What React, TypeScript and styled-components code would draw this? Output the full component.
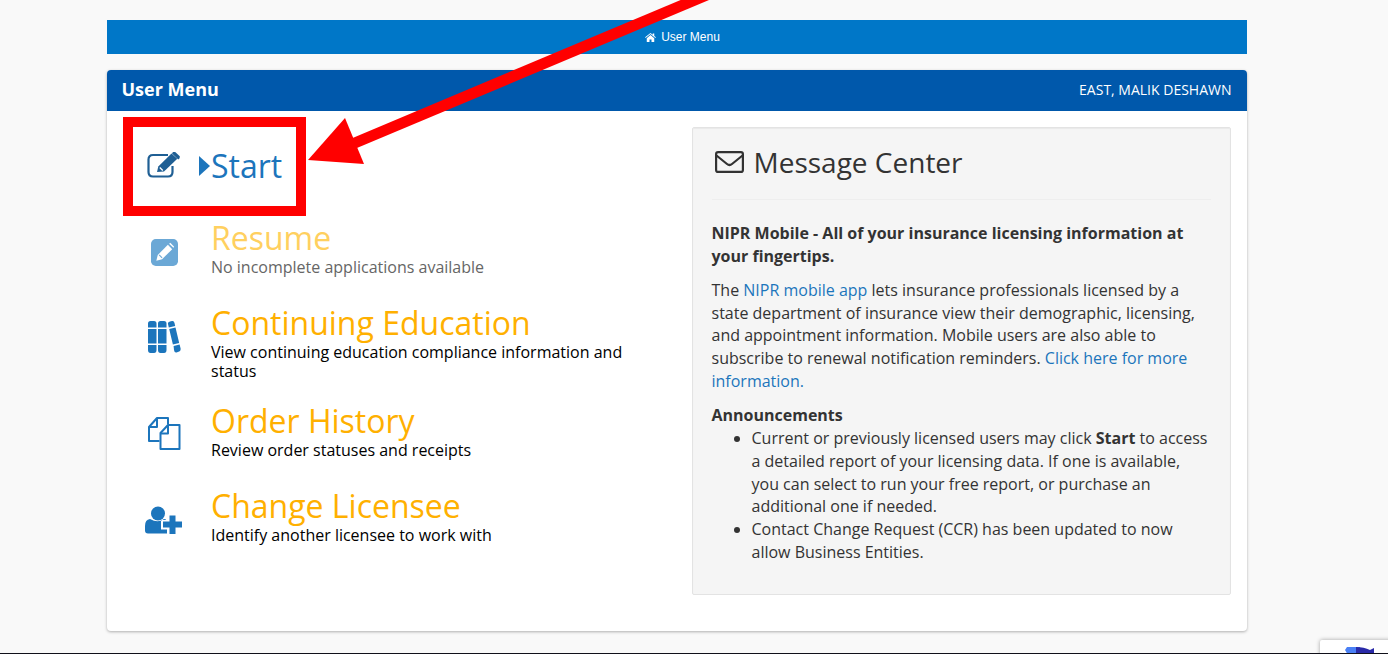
import { ReactNode } from 'react'
import styled, { createGlobalStyle } from 'styled-components'

const GlobalStyle = createGlobalStyle`
  html, body {
    margin: 0;
    height: 654px;
    overflow: hidden;
    background: #f9f9f9;
  }
  * {
    box-sizing: border-box;
  }
`

const EditIcon = () => (
  <svg width="34" height="26" viewBox="0 0 34 26" fill="none">
    <path d="M21 3H6Q1.500 3 1.500 7.500V20Q1.500 24.500 6 24.500H21Q25.500 24.500 25.500 20V14" stroke="#1f5f94" strokeWidth="2.200" />
    <path d="M10 20l1.300-5.600L24.500 1.500l5.800 5.300L17 19.500z" fill="#1f5f94" />
    <path d="M26 0l2-.2 4.800 4.400-.2 2-1.400 1.200-6.200-5.800z" fill="#1f5f94" />
    <path d="M12.800 15.600l3 2.800" stroke="#fff" strokeWidth="1.400" />
  </svg>
)

const PencilSquareIcon = () => (
  <svg width="27" height="27" viewBox="0 0 28 28">
    <rect width="28" height="28" rx="5" fill="#6ba8d6" />
    <path d="M5.500 22.500l1.500-6L17.500 6l4.500 4.500L11.500 21z" fill="#fff" />
    <path d="M18.800 4.800l1.200-.8 4 4-.8 1.200z" fill="#fff" />
    <path d="M8.500 16.500l3 3" stroke="#6ba8d6" strokeWidth="1.200" />
  </svg>
)

const BooksIcon = () => (
  <svg width="33" height="33" viewBox="0 0 33 33" fill="#1c75bc">
    <path d="M0 2.500Q0 0 2.500 0H6Q8.500 0 8.500 2.500V6.500H0zM0 8H8.500V22.500H0zM0 24H8.500V29Q8.500 32 6 32H2.500Q0 32 0 29z" />
    <path d="M10 2.500Q10 0 12.500 0H16Q18.500 0 18.500 2.500V6.500H10zM10 8H18.500V22.500H10zM10 24H18.500V29Q18.500 32 16 32H12.500Q10 32 10 29z" />
    <path d="M20 3Q19.500 1 22 .500L24 0Q26 -.200 26.500 2L27.200 5 20.800 6.500zM21.200 8l6.300-1.500 3.700 15.500-6.300 1.500zM25.600 25l6-1.500 1 4Q33 30 30.500 30.800L28.500 31.500Q26.500 32 26 29z" />
  </svg>
)

const FilesIcon = () => (
  <svg width="33" height="36" viewBox="0 0 33 36" fill="none" stroke="#1c75bc" strokeWidth="2" strokeLinejoin="round">
    <path d="M11.500 24H1V10L9 1H20V7.500" />
    <path d="M9 1.500V10H1" />
    <path d="M12.500 32V16L20 8H31.500V32z" />
    <path d="M20 8.500V16.500H12.500" />
  </svg>
)

const UserPlusIcon = () => (
  <svg width="38" height="29" viewBox="0 0 38 29" fill="#1c75bc">
    <circle cx="13" cy="7.500" r="7" />
    <path d="M0 20Q0 13.500 5 13Q13 17.500 19 13L21 13.500V14H16V23.500H22V27.500H3Q0 27.500 0 24.500z" />
    <path d="M24.500 9.500H30.500V15.500H37V21.500H30.500V28H24.500V21.500H18V15.500H24.500z" />
  </svg>
)

const HomeIcon = () => (
  <svg width="11" height="9" viewBox="0 0 22 18" fill="#fff">
    <path d="M11 4.200L3.500 10.400V17a1 1 0 0 0 1 1H9v-5h4v5h4.500a1 1 0 0 0 1-1V10.400z" />
    <path d="M21.800 8.700L18.500 6V1h-3v2.500L11 0 .2 8.700 1.300 10 11 2.200 20.700 10z" />
  </svg>
)

const EnvelopeIcon = () => (
  <svg width="29" height="22" viewBox="0 0 29 22" fill="none" stroke="#333" strokeWidth="2.200">
    <rect x="1.100" y="1.100" width="26.800" height="19.800" rx="2" />
    <path d="M1.500 4.500L12 13q2.500 2 5 0L27.500 4.500" />
  </svg>
)

type MenuEntry = {
  icon: ReactNode
  title: string
  text: string
  faded?: boolean
}

const entries: MenuEntry[] = [
  { icon: <PencilSquareIcon />, title: 'Resume', text: 'No incomplete applications available', faded: true },
  { icon: <BooksIcon />, title: 'Continuing Education', text: 'View continuing education compliance information and status' },
  { icon: <FilesIcon />, title: 'Order History', text: 'Review order statuses and receipts' },
  { icon: <UserPlusIcon />, title: 'Change Licensee', text: 'Identify another licensee to work with' },
]

const App = () => (
  <>
    <GlobalStyle />
    <Page>
      <TopBar>
        <HomeIcon />
        <span>User Menu</span>
      </TopBar>

      <Panel>
        <PanelHeading>
          <PanelTitle>User Menu</PanelTitle>
          <PanelUser>EAST, MALIK DESHAWN</PanelUser>
        </PanelHeading>

        <PanelBody>
          <Menu>
            <StartRow>
              <IconCell><EditIcon /></IconCell>
              <StartLink><Caret />Start</StartLink>
            </StartRow>

            {entries.map((entry) => (
              <MenuRow key={entry.title}>
                <IconCell>{entry.icon}</IconCell>
                <div>
                  <MenuTitle $faded={entry.faded}>{entry.title}</MenuTitle>
                  <MenuText $faded={entry.faded}>{entry.text}</MenuText>
                </div>
              </MenuRow>
            ))}
          </Menu>

          <Well>
            <WellTitle><EnvelopeIcon />Message Center</WellTitle>
            <Divider />
            <Lead>NIPR Mobile - All of your insurance licensing information at your fingertips.</Lead>
            <Paragraph>
              The <Link>NIPR mobile app</Link> lets insurance professionals licensed by a state department of
              insurance view their demographic, licensing, and appointment information. Mobile users are also able
              to subscribe to renewal notification reminders. <Link>Click here for more information.</Link>
            </Paragraph>
            <Announcements>Announcements</Announcements>
            <Bullets>
              <li>
                Current or previously licensed users may click <b>Start</b> to access a detailed report of your
                licensing data. If one is available, you can select to run your free report, or purchase an
                additional one if needed.
              </li>
              <li>Contact Change Request (CCR) has been updated to now allow Business Entities.</li>
            </Bullets>
          </Well>
        </PanelBody>
      </Panel>

      <Annotation />
      <Arrow width="760" height="180" viewBox="0 0 760 180">
        <path d="M740 -19L350 145" stroke="#ff0000" strokeWidth="11" fill="none" />
        <path d="M308 160L345 118L364 164z" fill="#ff0000" />
      </Arrow>

      <Recaptcha>
        <svg width="36" height="8" viewBox="0 0 36 8">
          <path d="M0 0H7L5 3 8 8H20V0z" fill="#4a80f5" />
          <path d="M16 0Q24 0 30 3L34 1V8H16z" fill="#2a2aa8" />
        </svg>
      </Recaptcha>
    </Page>
  </>
)

const Page = styled.div`
  position: relative;
  height: 654px;
  padding: 20px 0 0 107px;
  border-bottom: 1px solid #10101a;
  font-family: 'Open Sans', sans-serif;
  font-size: 16px;
  line-height: 22.860px;
  color: #333;
  overflow: hidden;
`

const TopBar = styled.div`
  width: 1140px;
  height: 34px;
  padding-left: 11px;
  display: flex;
  align-items: center;
  justify-content: center;
  gap: 5px;
  background: #0077c8;
  color: #fff;
  font-family: 'Liberation Sans', Arial, sans-serif;
  font-size: 12px;
`

const Panel = styled.div`
  width: 1140px;
  height: 561px;
  margin-top: 16px;
  background: #fff;
  border-radius: 4px;
  box-shadow: 0 1px 3px rgba(0, 0, 0, 0.3);
  overflow: hidden;
`

const PanelHeading = styled.div`
  height: 41px;
  padding: 0 15.500px 0 14.500px;
  display: flex;
  align-items: center;
  justify-content: space-between;
  background: #0058ab;
  color: #fff;
`

const PanelTitle = styled.div`
  margin-top: -2px;
  font-size: 18px;
  font-weight: 700;
`

const PanelUser = styled.div`
  font-size: 14px;
`

const PanelBody = styled.div`
  display: flex;
  justify-content: space-between;
  padding: 16px 16px 0 24px;
`

const Menu = styled.div`
  width: 520px;
`

const StartRow = styled.div`
  height: 93px;
  padding-bottom: 17px;
  display: flex;
  align-items: center;
`

const IconCell = styled.div`
  width: 66px;
  height: 40px;
  flex: none;
  display: flex;
  align-items: center;
  justify-content: center;
`

const StartLink = styled.div`
  display: flex;
  align-items: center;
  margin-left: 2px;
  padding-top: 1px;
  font-size: 32px;
  line-height: 35px;
  color: #1c75bc;
`

const Caret = styled.span`
  width: 0;
  height: 0;
  margin-right: 1px;
  border-style: solid;
  border-width: 10px 0 10px 11px;
  border-color: transparent transparent transparent #1c75bc;
`

const MenuRow = styled.div`
  min-height: 85px;
  padding-bottom: 22px;
  display: flex;
  align-items: flex-start;

  ${IconCell} {
    margin-top: 12px;
    margin-right: 14px;
  }
`

const MenuTitle = styled.div<{ $faded?: boolean }>`
  margin-bottom: 3px;
  font-size: 32px;
  line-height: 35px;
  color: ${(p) => (p.$faded ? '#ffd05f' : '#ffb000')};
`

const MenuText = styled.div<{ $faded?: boolean }>`
  font-size: 16px;
  line-height: 19px;
  color: ${(p) => (p.$faded ? '#666' : '#000')};
`

const Well = styled.div`
  width: 539px;
  height: 468px;
  padding: 19px 19px 19px 18.500px;
  background: #f5f5f5;
  border: 1px solid #e3e3e3;
  border-radius: 2px;
  box-shadow: inset 0 1px 1px rgba(0, 0, 0, 0.05);
`

const WellTitle = styled.h2`
  margin: -2px 0 0 3px;
  height: 34px;
  display: flex;
  align-items: center;
  gap: 10px;
  font-size: 28px;
  font-weight: 400;
`

const Divider = styled.hr`
  margin: 20px 0 22px;
  border: 0;
  border-top: 1px solid #eee;
`

const Lead = styled.p`
  margin: 0 0 11px;
  font-weight: 700;
`

const Paragraph = styled.p`
  margin: 0 0 11px;
`

const Link = styled.a`
  color: #1c75bc;
`

const Announcements = styled.div`
  font-weight: 700;
`

const Bullets = styled.ul`
  margin: 0;
  padding-left: 40px;
`

const Annotation = styled.div`
  position: absolute;
  left: 123px;
  top: 117px;
  width: 183px;
  height: 99px;
  border: 10px solid #ff0000;
`

const Arrow = styled.svg`
  position: absolute;
  left: 0;
  top: 0;
`

const Recaptcha = styled.div`
  position: absolute;
  left: 1320px;
  top: 640px;
  width: 90px;
  height: 30px;
  padding: 7px 0 0 20px;
  background: #fff;
  border-radius: 2px;
  box-shadow: 0 0 4px rgba(0, 0, 0, 0.35);
  line-height: 0;
`

export default App
